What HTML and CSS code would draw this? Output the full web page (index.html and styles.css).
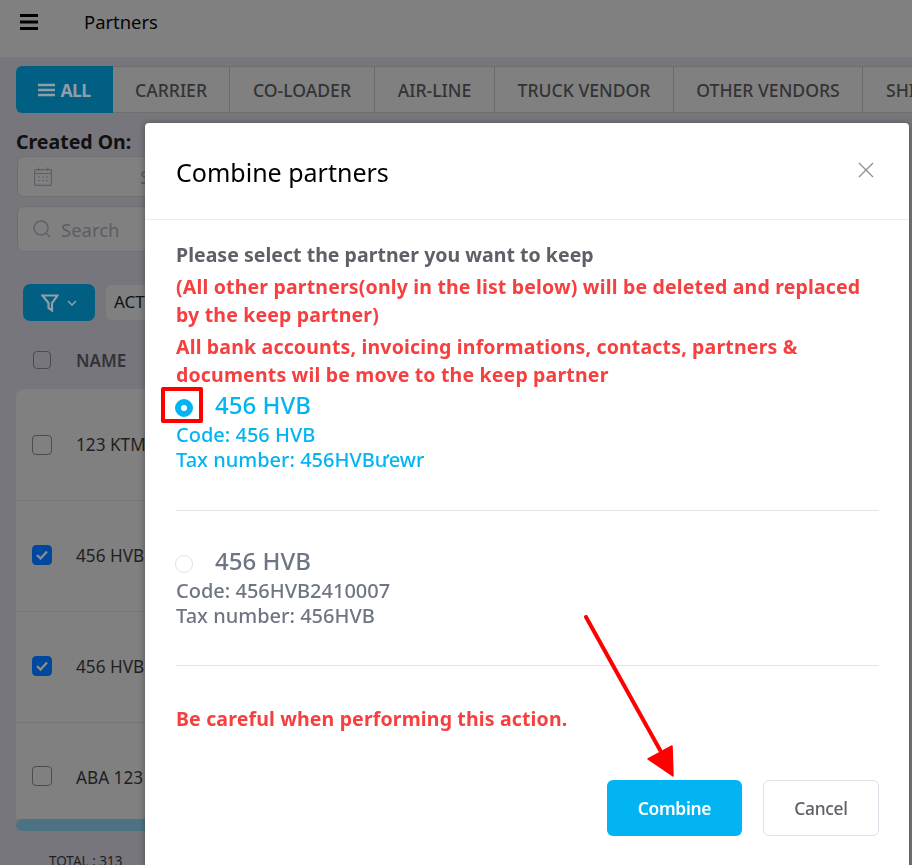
FILE: index.html
```html
<!DOCTYPE html>
<html lang="en">
<head>
    <meta charset="UTF-8">
    <meta name="viewport" content="width=device-width, initial-scale=1.0">
    <title>Partners</title>
    <link rel="stylesheet" href="styles.css">
</head>
<body>
    <header class="topbar">
        <svg class="burger" width="20" height="16" viewBox="0 0 20 16"><path d="M0 1.5h18M0 8h18M0 14.5h18" stroke="#000" stroke-width="3"/></svg>
        <span class="topbar-title">Partners</span>
    </header>

    <main class="page">
        <nav class="tabs">
            <div class="tab tab-active">
                <svg width="17" height="14" viewBox="0 0 17 14"><path d="M0 2h17M0 7h17M0 12h17" stroke="#8f9ea8" stroke-width="2.6"/></svg>
                ALL
            </div>
            <div class="tab tab-carrier">CARRIER</div>
            <div class="tab tab-coloader">CO-LOADER</div>
            <div class="tab tab-airline">AIR-LINE</div>
            <div class="tab tab-truck">TRUCK VENDOR</div>
            <div class="tab tab-other">OTHER VENDORS</div>
            <div class="tab tab-last">SHI</div>
        </nav>

        <div class="created-label">Created On:</div>
        <div class="field field-date">
            <svg width="18" height="19" viewBox="0 0 18 19" fill="none" stroke="#5f6068" stroke-width="1.2"><rect x="0.6" y="2.6" width="16.8" height="15.8" rx="1"/><path d="M0.6 6.5h16.8M4.5 0.5v3.5M13.5 0.5v3.5M4 10h2M8 10h2M12 10h2M4 13.5h2M8 13.5h2M12 13.5h2"/></svg>
            <span class="date-text">Start date</span>
        </div>
        <div class="field field-search">
            <svg width="18" height="18" viewBox="0 0 18 18" fill="none" stroke="#5f6068" stroke-width="1.5"><circle cx="8" cy="8" r="7"/><path d="M13 13l4 4"/></svg>
            <span>Search</span>
        </div>

        <div class="filter-row">
            <div class="filter-btn">
                <svg width="18" height="18" viewBox="0 0 18 18" fill="none" stroke="#8f9ea8" stroke-width="2.2"><path d="M1.5 1.5h15L11 9v7.5L7.5 14V9z"/></svg>
                <svg width="10" height="6" viewBox="0 0 10 6" fill="none" stroke="#8f9ea8" stroke-width="1.6"><path d="M1 1l4 4 4-4"/></svg>
            </div>
            <div class="action-btn">ACTION</div>
        </div>

        <div class="table-head">
            <span class="check"></span>
            <span class="name-head">NAME</span>
        </div>

        <div class="table-body">
            <div class="row row-first"><span class="check"></span><span>123 KTM</span></div>
            <div class="row"><span class="check check-on"><svg width="12" height="10" viewBox="0 0 12 10" fill="none" stroke="#8c8c8c" stroke-width="2.4"><path d="M1 5l3.5 3.5L11 1.5"/></svg></span><span>456 HVB</span></div>
            <div class="row"><span class="check check-on"><svg width="12" height="10" viewBox="0 0 12 10" fill="none" stroke="#8c8c8c" stroke-width="2.4"><path d="M1 5l3.5 3.5L11 1.5"/></svg></span><span>456 HVB</span></div>
            <div class="row row-last"><span class="check"></span><span>ABA 123</span></div>
        </div>
        <div class="scrollbar"></div>
        <div class="total">TOTAL : 313</div>
    </main>

    <section class="modal">
        <div class="modal-head">
            <h2>Combine partners</h2>
            <svg class="modal-close" width="16" height="16" viewBox="0 0 16 16" stroke="#8b8d94" stroke-width="1.3"><path d="M1 1l14 14M15 1L1 15"/></svg>
        </div>
        <div class="modal-body">
            <p class="keep-title">Please select the partner you want to keep</p>
            <p class="warn warn-first">(All other partners(only in the list below) will be deleted and replaced by the keep partner)</p>
            <p class="warn warn-second">All bank accounts, invoicing informations, contacts, partners &amp; documents wil be move to the keep partner</p>

            <div class="partner partner-on">
                <div class="partner-name"><span class="radio radio-on"></span>456 HVB</div>
                <div>Code: 456 HVB</div>
                <div>Tax number: 456HVBưewr</div>
            </div>
            <div class="partner partner-off">
                <div class="partner-name"><span class="radio"></span>456 HVB</div>
                <div>Code: 456HVB2410007</div>
                <div>Tax number: 456HVB</div>
            </div>

            <p class="warn warn-last">Be careful when performing this action.</p>

            <div class="modal-actions">
                <button class="btn btn-combine">Combine</button>
                <button class="btn btn-cancel">Cancel</button>
            </div>
        </div>
    </section>

    <!-- annotations drawn on top of the screenshot -->
    <div class="mark-box"></div>
    <svg class="mark-arrow" width="110" height="180" viewBox="0 0 110 180">
        <path d="M3 2L77 135" stroke="#f00" stroke-width="4" stroke-linecap="round"/>
        <path d="M65 144L89 131L90 161Z" fill="#f00" stroke="#f00" stroke-width="1.5" stroke-linejoin="round"/>
    </svg>
</body>
</html>
```

FILE: styles.css
```css
* {
	box-sizing: border-box;
}
html, body {
	height: 100%;
}
body {
	margin: 0;
	overflow: hidden;
	background-color: #77767c;
	font-family: "Noto Sans", "Open Sans", sans-serif;
	font-size: 16px;
	color: #000;
}
p {
	margin: 0;
}

/* top bar */
.topbar {
	height: 57px;
	background-color: #808080;
	display: flex;
	align-items: center;
	padding: 0 0 14px 20px;
}
.burger {
	flex: none;
}
.topbar-title {
	margin-left: 44px;
	font-size: 18.4px;
	color: #050505;
}

/* dimmed page behind the modal */
.page {
	padding: 9px 0 0 16px;
}
.tabs {
	display: flex;
	height: 47px;
	width: 896px;
	background-color: #808080;
	border-radius: 6px 0 0 6px;
	border-bottom: 1px solid #6f6f72;
	border-top: 1px solid #6f6f72;
}
.tab {
	flex: none;
	display: flex;
	align-items: center;
	justify-content: center;
	gap: 5px;
	font-size: 17.6px;
	font-weight: 500;
	color: #333336;
	border-right: 1px solid #6b6b6e;
}
.tab-active {
	width: 97px;
	margin: -1px 0;
	background-color: #005f82;
	color: #8f9ea8;
	font-weight: 700;
	letter-spacing: -0.6px;
	border: 0;
	border-radius: 6px 0 0 6px;
}
.tab-carrier { width: 117px; }
.tab-coloader { width: 145px; }
.tab-airline { width: 120px; }
.tab-truck { width: 179px; }
.tab-other { width: 189px; }
.tab-last { width: 49px; border-right: 0; justify-content: flex-start; padding-left: 23px; }

.created-label {
	margin-top: 15px;
	font-size: 19.5px;
	line-height: 28px;
	font-weight: 700;
	color: #111;
}
.field {
	margin-left: 1px;
	width: 300px;
	display: flex;
	align-items: center;
	background-color: #808080;
	border: 1px solid #6f6f72;
	border-radius: 6px;
}
.field-date {
	height: 41px;
	padding-left: 16px;
}
.date-text {
	margin-left: 88px;
	font-size: 18.5px;
	color: #5c5d64;
}
.field-search {
	margin-top: 9px;
	height: 46px;
	padding-left: 15px;
	gap: 10px;
	font-size: 18.5px;
	color: #5c5d64;
}

.filter-row {
	display: flex;
	align-items: center;
	margin: 32px 0 0 7px;
	gap: 11px;
}
.filter-btn {
	width: 72px;
	height: 37px;
	border-radius: 7px;
	background-color: #005f82;
	display: flex;
	align-items: center;
	justify-content: center;
	gap: 8px;
}
.action-btn {
	width: 150px;
	height: 35px;
	background-color: #808080;
	border-radius: 5px;
	padding-left: 8px;
	line-height: 33px;
	font-size: 17px;
	color: #111;
}

.table-head {
	display: flex;
	align-items: center;
	height: 58px;
	margin-top: 10px;
	padding-left: 17px;
	color: #333336;
	font-weight: 600;
	font-size: 17px;
}
.name-head {
	margin-left: 25px;
}
.table-body {
	background-color: #808080;
	border-radius: 8px 0 0 0;
	width: 300px;
}
.row {
	height: 111px;
	display: flex;
	align-items: center;
	padding: 0 0 2px 16px;
	font-size: 17.2px;
	color: #1f1f1f;
	border-top: 1px solid #75757a;
}
.row-first {
	border-top: 0;
	padding-bottom: 0;
}
.row-last {
	height: 97px;
	align-items: flex-start;
	padding-top: 43px;
}
.check {
	flex: none;
	width: 20px;
	height: 20px;
	margin-right: 24px;
	border: 1.5px solid #4c4c50;
	border-radius: 4px;
	display: flex;
	align-items: center;
	justify-content: center;
}
.table-head .check {
	width: 18px;
	height: 18px;
	margin-right: 0;
}
.check-on {
	background-color: #00479e;
	border-color: #00479e;
}
.scrollbar {
	height: 12px;
	width: 300px;
	border-radius: 6px 0 0 6px;
	background-color: #4d7382;
}
.total {
	margin: 21px 0 0 33px;
	font-size: 13.5px;
	color: #1f1f1f;
}

/* modal */
.modal {
	position: fixed;
	left: 145px;
	top: 123px;
	width: 764px;
	height: 760px;
	background-color: #fff;
	border-radius: 4px;
	box-shadow: 0 0 6px rgba(0,0,0,0.35);
}
.modal-head {
	height: 97px;
	padding: 29px 30px 0 31px;
	border-bottom: 1px solid #ecedf0;
	display: flex;
	justify-content: space-between;
}
.modal-head h2 {
	margin: 0;
	font-size: 25px;
	line-height: 40px;
	font-weight: 400;
	color: #000;
}
.modal-close {
	margin: 10px 5px 0 0;
}
.modal-body {
	padding: 20px 30px 0 31px;
}
.keep-title {
	font-size: 19.5px;
	line-height: 30px;
	font-weight: 700;
	letter-spacing: 0.03px;
	color: #5e6067;
}
.warn {
	max-width: 695px;
	font-size: 19.5px;
	line-height: 28px;
	font-weight: 700;
	letter-spacing: 0.17px;
	color: #f64040;
}
.warn-first {
	margin-top: 3px;
}
.warn-second {
	margin-top: 4px;
}
.warn-last {
	margin-top: 39px;
	letter-spacing: 0.15px;
}
.partner {
	font-size: 20px;
	font-weight: 500;
	line-height: 25px;
	height: 155px;
	border-bottom: 1px solid #e2e4e9;
}
.partner-on {
	height: 122px;
	color: #03b4f2;
}
.partner-off {
	padding-top: 34px;
	color: #6f7683;
}
.partner-name {
	display: flex;
	align-items: center;
	margin-bottom: 1px;
	font-size: 24px;
	line-height: 32px;
	font-weight: 500;
}
.radio {
	width: 18px;
	height: 18px;
	margin: 6px 22px 0 -1px;
	border-radius: 50%;
	border: 1px solid #dfe1ea;
	background-color: #fff;
}
.radio-on {
	border: 6px solid #03b4f2;
}
.modal-actions {
	display: flex;
	justify-content: flex-end;
	gap: 21px;
	margin-top: 47px;
}
.btn {
	height: 56px;
	font-family: inherit;
	font-size: 17.4px;
	letter-spacing: -0.3px;
	border-radius: 6px;
}
.btn-combine {
	width: 135px;
	background-color: #03b4f2;
	border: 0;
	color: #fff;
	font-weight: 600;
}
.btn-cancel {
	width: 116px;
	background-color: #fff;
	border: 1px solid #dfe1ea;
	color: #5e6067;
	font-weight: 500;
}

/* red annotations */
.mark-box {
	position: fixed;
	left: 161px;
	top: 387px;
	width: 42px;
	height: 36px;
	border: 4px solid #f00;
	border-radius: 2px;
}
.mark-arrow {
	position: fixed;
	left: 583px;
	top: 615px;
}
```
